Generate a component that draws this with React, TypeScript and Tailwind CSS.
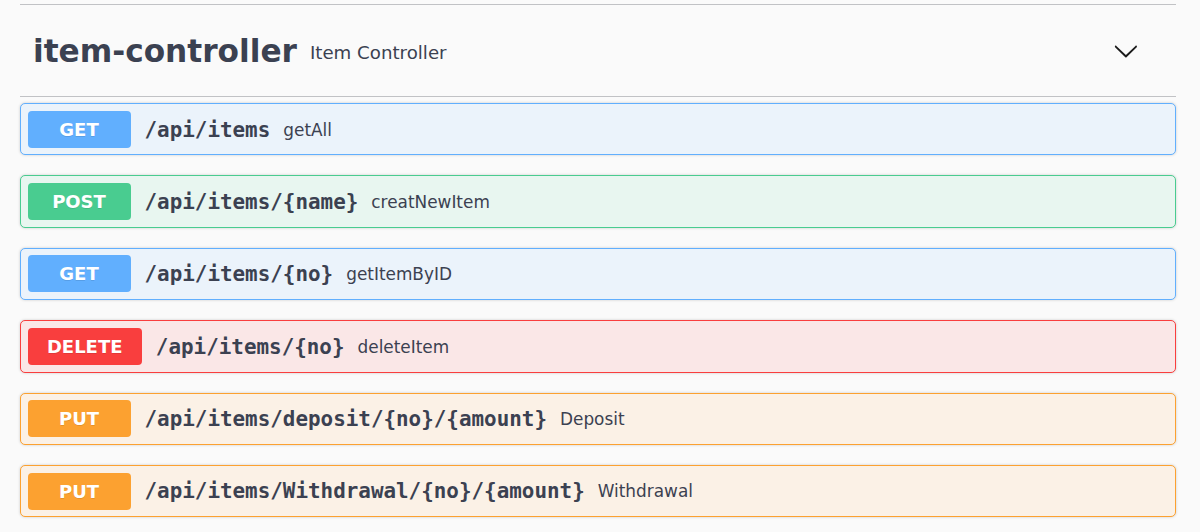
import React from "react";

type Op = {
  method: "GET" | "POST" | "PUT" | "DELETE";
  path: string;
  summary: string;
};

const ops: Op[] = [
  { method: "GET", path: "/api/items", summary: "getAll" },
  { method: "POST", path: "/api/items/{name}", summary: "creatNewItem" },
  { method: "GET", path: "/api/items/{no}", summary: "getItemByID" },
  { method: "DELETE", path: "/api/items/{no}", summary: "deleteItem" },
  { method: "PUT", path: "/api/items/deposit/{no}/{amount}", summary: "Deposit" },
  { method: "PUT", path: "/api/items/Withdrawal/{no}/{amount}", summary: "Withdrawal" },
];

const styles: Record<Op["method"], { box: string; badge: string }> = {
  GET: { box: "border-[#61affe] bg-[#ebf3fb]", badge: "bg-[#61affe]" },
  POST: { box: "border-[#49cc90] bg-[#e8f6f0]", badge: "bg-[#49cc90]" },
  DELETE: { box: "border-[#f93e3e] bg-[#fae7e7]", badge: "bg-[#f93e3e]" },
  PUT: { box: "border-[#fca130] bg-[#fbf1e6]", badge: "bg-[#fca130]" },
};

function Chevron() {
  return (
    <svg width="25.8" height="25.8" viewBox="0 0 20 20" className="fill-[#1a1a1a]">
      <path d="M17.418 6.109c.272-.268.709-.268.979 0s.27.701 0 .969l-7.908 7.83c-.27.268-.707.268-.979 0l-7.908-7.83c-.27-.268-.27-.701 0-.969.271-.268.709-.268.979 0L10 13.25l7.418-7.141z" />
    </svg>
  );
}

function OpRow({ op }: { op: Op }) {
  const s = styles[op.method];
  return (
    <div
      className={`mb-[20px] flex h-[52.4px] items-center rounded-[5px] border px-[6.5px] shadow-[0_0_3px_rgba(0,0,0,0.19)] ${s.box}`}
    >
      <div
        className={`flex h-[37px] min-w-[103px] items-center justify-center rounded-[4px] px-[19.4px] text-[18px] font-bold text-white [text-shadow:0_1px_0_rgba(0,0,0,0.1)] ${s.badge}`}
      >
        {op.method}
      </div>
      <span className="pl-[14px] pr-[13px] pt-[2px] font-['DejaVu_Sans_Mono',monospace] text-[20.9px] font-bold text-[#3b4151]">
        {op.path}
      </span>
      <span className="pt-[2px] text-[16.9px] text-[#3b4151]">{op.summary}</span>
    </div>
  );
}

export default function App() {
  return (
    <div className="min-h-[532px] bg-[#fafafa] pt-[4px] font-['DejaVu_Sans',sans-serif] text-[#3b4151]">
      <div className="ml-[20px] w-[1156px]">
        <div className="h-px bg-[#c1c2c5]" />
        <div className="mb-[6px] flex h-[92px] items-center border-b border-[#c1c2c5] pl-[13px] pr-[37px]">
          <span className="pt-[2px] text-[31.2px] font-bold leading-none">item-controller</span>
          <span className="flex-1 px-[13px] pt-[4px] text-[18.2px]">Item Controller</span>
          <Chevron />
        </div>
        {ops.map((op, i) => (
          <OpRow key={i} op={op} />
        ))}
      </div>
    </div>
  );
}
